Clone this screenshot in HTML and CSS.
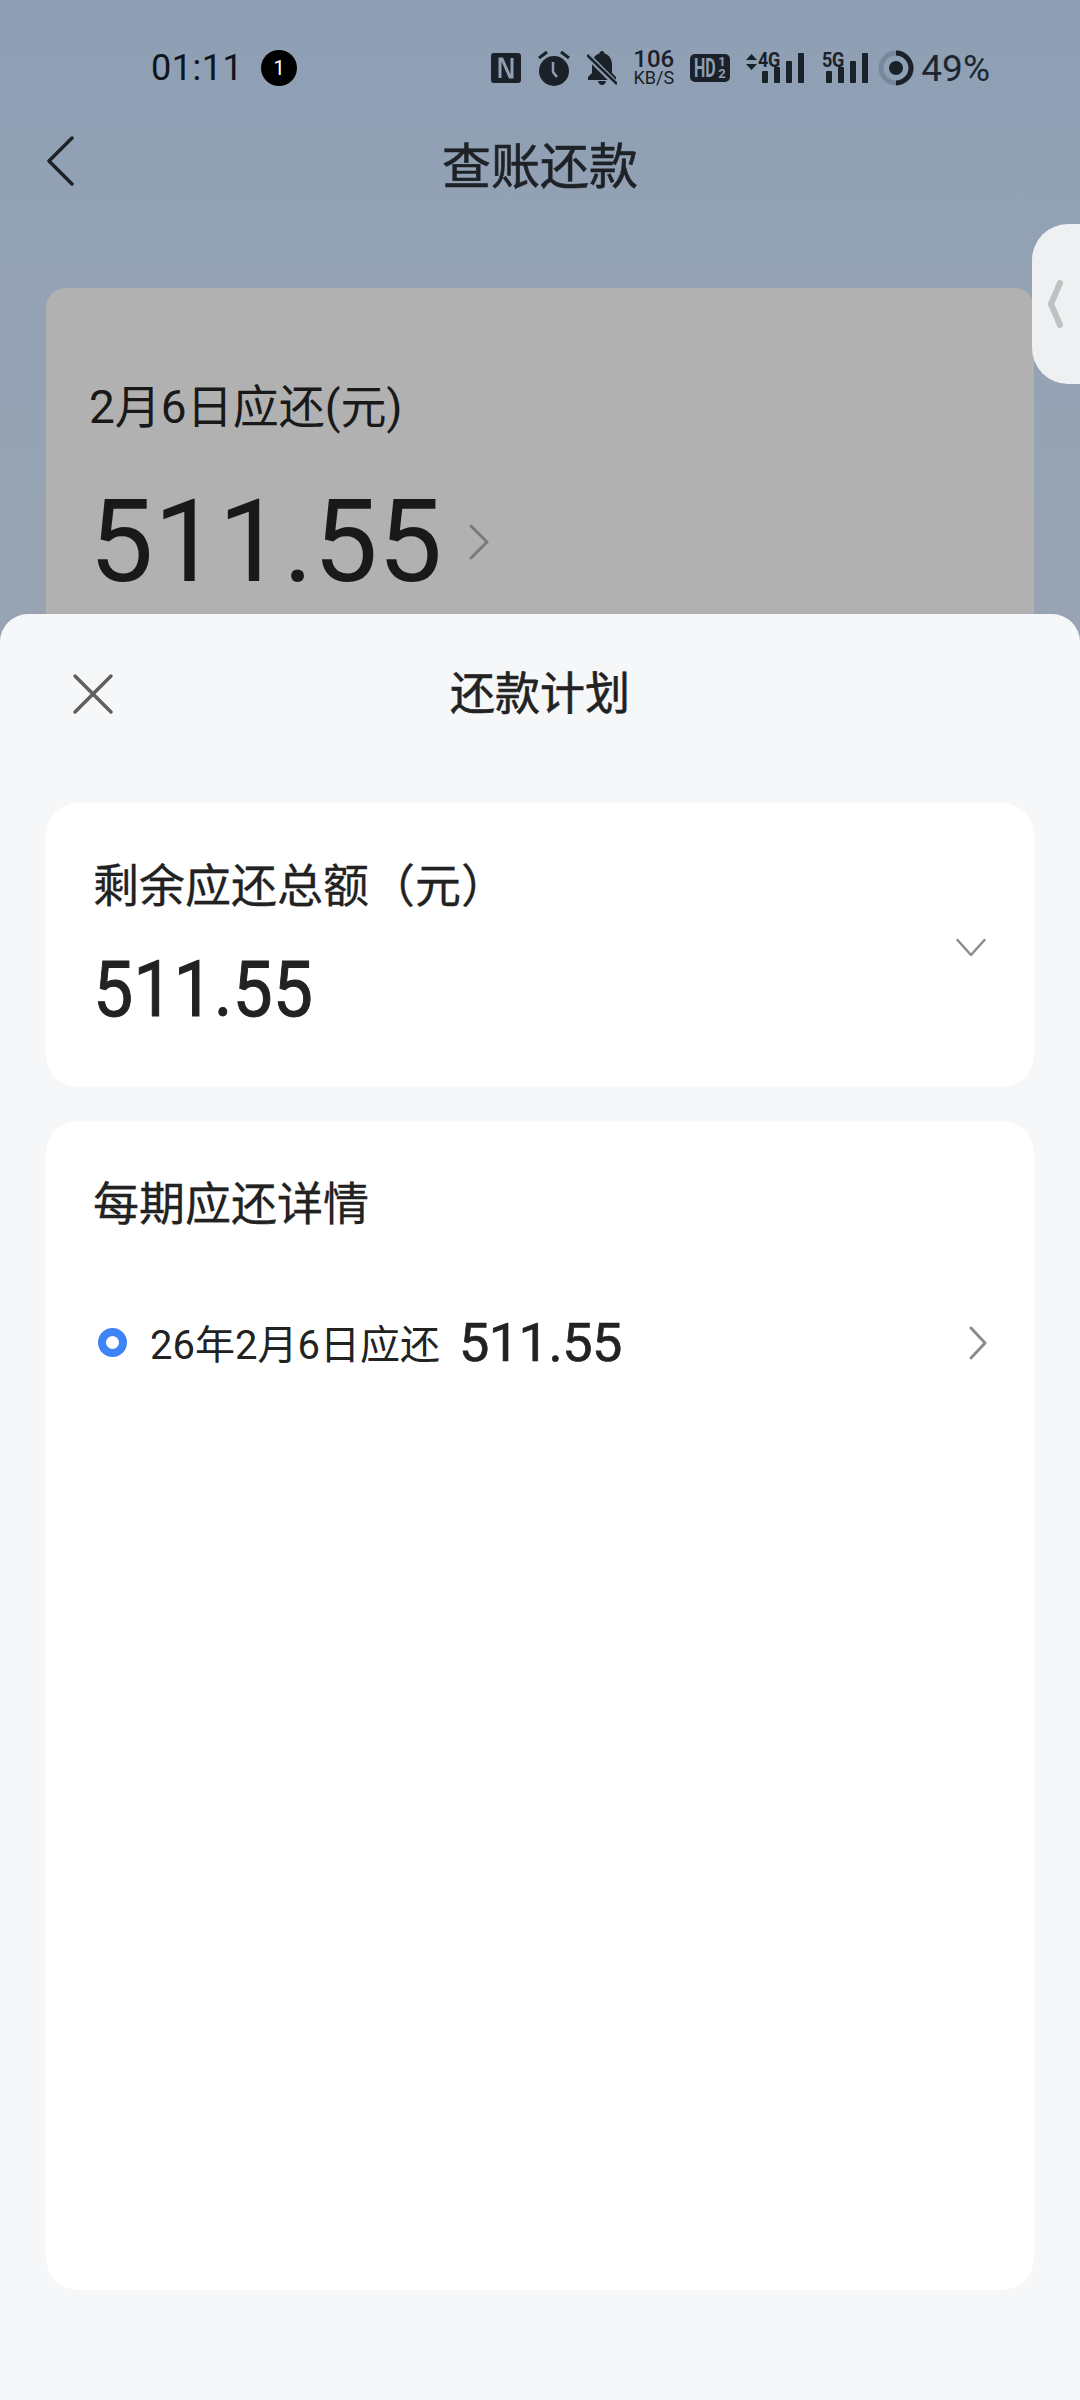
FILE: index.html
```html
<!DOCTYPE html>
<html>
<head>
    <meta charset="utf-8" />
    <title>查账还款</title>
    <link rel="stylesheet" href="styles.css">
</head>
<body>
<div class="page">
    <div class="status-bar">
        <div class="status-left">
            <span class="clock">01:11</span>
            <span class="notice-count">1</span>
        </div>
        <div class="status-right">
            <div class="status-icons">
                <svg class="ic-nfc" width="30" height="30" viewBox="0 0 30 30">
                    <rect width="30" height="30" rx="3" fill="#1b2129"/>
                    <path d="M9 25V6h2l8 18h2V5" fill="none" stroke="#8e9fb4" stroke-width="3"/>
                </svg>
                <svg class="ic-alarm" width="34" height="36" viewBox="0 0 34 36">
                    <circle cx="17" cy="21" r="15" fill="#1b2129"/>
                    <path d="M2 8l8-6M32 8l-8-6" stroke="#1b2129" stroke-width="3" fill="none"/>
                    <path d="M16 12v10l4 5" stroke="#8e9fb4" stroke-width="2.5" fill="none"/>
                </svg>
                <svg class="ic-bell" width="30" height="36" viewBox="0 0 30 36">
                    <path d="M15 1c1.500 0 2.500 1 2.500 2.500C23 5 25 10 25 15v8l4 4v3H1v-3l4-4v-8C5 10 7 5 12.500 3.500 12.500 2 13.500 1 15 1z" fill="#1b2129"/>
                    <path d="M11 31h8c0 2-2 4-4 4s-4-2-4-4z" fill="#1b2129"/>
                    <path d="M1 6l28 28" stroke="#8e9fb4" stroke-width="6"/>
                    <path d="M0 5l30 29" stroke="#1b2129" stroke-width="2.500"/>
                </svg>
                <div class="net-speed">
                    <span class="speed-num">106</span>
                    <span class="speed-unit">KB/S</span>
                </div>
                <div class="hd-badge"><span class="hd-text">HD</span><span class="hd-sim"><i>1</i><i>2</i></span></div>
                <div class="signal signal-4g">
                    <svg class="updown" width="11" height="16" viewBox="0 0 11 16">
                        <path d="M5.500 0L11 6H0zM5.500 16L0 10h11z" fill="#1b2129"/>
                    </svg>
                    <span class="net-type">4G</span>
                    <svg class="bars" width="42" height="30" viewBox="0 0 42 30">
                        <rect x="0" y="18" width="6" height="12" rx="1"/>
                        <rect x="12" y="14" width="6" height="16" rx="1"/>
                        <rect x="24" y="8" width="6" height="22" rx="1"/>
                        <rect x="36" y="0" width="6" height="30" rx="1"/>
                    </svg>
                </div>
                <div class="signal signal-5g">
                    <span class="net-type">5G</span>
                    <svg class="bars" width="42" height="30" viewBox="0 0 42 30">
                        <rect x="0" y="18" width="6" height="12" rx="1"/>
                        <rect x="12" y="14" width="6" height="16" rx="1"/>
                        <rect x="24" y="8" width="6" height="22" rx="1"/>
                        <rect x="36" y="0" width="6" height="30" rx="1"/>
                    </svg>
                </div>
            </div>
            <div class="battery">
                <svg width="36" height="36" viewBox="0 0 36 36">
                    <circle cx="18" cy="18" r="15" fill="none" stroke="#78889c" stroke-width="5"/>
                    <path d="M18 3a15 15 0 0 1 0 30" fill="none" stroke="#1b2129" stroke-width="5"/>
                    <circle cx="18" cy="18" r="7" fill="#1b2129"/>
                </svg>
                <span class="battery-num">49%</span>
            </div>
        </div>
    </div>

    <div class="nav-bar">
        <svg class="nav-back" width="30" height="50" viewBox="0 0 30 50">
            <path d="M27 2L4 25l23 23" fill="none" stroke="#1e2226" stroke-width="3.500" stroke-linecap="round" stroke-linejoin="round"/>
        </svg>
        <span class="nav-title">查账还款</span>
    </div>

    <div class="bill-card">
        <div class="bill-label">2月6日应还(元)</div>
        <div class="bill-row">
            <span class="bill-amount">511.55</span>
            <svg width="20" height="36" viewBox="0 0 20 36">
                <path d="M2 2l16 16L2 34" fill="none" stroke="#7a7a7a" stroke-width="3" stroke-linecap="round" stroke-linejoin="round"/>
            </svg>
        </div>
    </div>

    <div class="side-tab">
        <svg width="16" height="48" viewBox="0 0 16 48">
            <path d="M13 3L4 24l9 21" fill="none" stroke="#bfc1c2" stroke-width="6" stroke-linecap="round" stroke-linejoin="round"/>
        </svg>
    </div>

    <div class="sheet">
        <div class="sheet-head">
            <svg class="sheet-close" width="42" height="42" viewBox="0 0 42 42">
                <path d="M3 3l36 36M39 3L3 39" fill="none" stroke="#5f5f5f" stroke-width="3.500" stroke-linecap="round"/>
            </svg>
            <span class="sheet-title">还款计划</span>
        </div>
        <div class="sheet-body">
            <div class="panel panel-total">
                <div>
                    <div class="panel-label">剩余应还总额（元）</div>
                    <div class="total-num">511.55</div>
                </div>
                <svg class="total-arrow" width="30" height="20" viewBox="0 0 30 20">
                    <path d="M1.500 2L15 17 28.500 2" fill="none" stroke="#8c8c8c" stroke-width="2.500" stroke-linecap="round" stroke-linejoin="round"/>
                </svg>
            </div>
            <div class="panel panel-detail">
                <div class="panel-label">每期应还详情</div>
                <div class="period-row">
                    <span class="period-dot"></span>
                    <span class="period-date">26年2月6日应还</span>
                    <span class="period-num">511.55</span>
                    <svg class="period-arrow" width="18" height="34" viewBox="0 0 18 34">
                        <path d="M2 2l14 15L2 32" fill="none" stroke="#8c8c8c" stroke-width="3" stroke-linecap="round" stroke-linejoin="round"/>
                    </svg>
                </div>
            </div>
        </div>
    </div>
</div>
</body>
</html>
```

FILE: styles.css
```css
* {
    box-sizing: border-box;
}
body {
    margin: 0px;
    font-family: Roboto, "Noto Sans CJK SC", sans-serif;
    color: #222;
}
.page {
    position: relative;
    width: 1080px;
    height: 2400px;
    overflow: hidden;
    background: linear-gradient(180deg, #8e9fb5 0px, #92a1b4 200px, #98a4b3 620px);
}

/* status bar */
.status-bar {
    height: 136px;
    display: flex;
    justify-content: space-between;
    align-items: center;
    padding: 0 90px 0 151px;
}
.status-left {
    display: flex;
    align-items: center;
    gap: 18px;
}
.clock {
    font-size: 36px;
    color: #10151b;
    letter-spacing: 0.5px;
}
.notice-count {
    width: 36px;
    height: 36px;
    border-radius: 50%;
    background: #000;
    color: #fff;
    font-size: 20px;
    line-height: 36px;
    text-align: center;
}
.status-right {
    display: flex;
    align-items: center;
    gap: 10px;
}
.status-icons {
    display: flex;
    align-items: center;
    gap: 16px;
}
.net-speed {
    width: 41px;
    display: flex;
    flex-direction: column;
    align-items: center;
    color: #1b2129;
}
.speed-num {
    font-size: 24px;
    line-height: 19px;
    font-weight: 500;
}
.speed-unit {
    font-size: 18px;
    line-height: 17px;
    white-space: nowrap;
}
.hd-badge {
    width: 40px;
    height: 28px;
    padding: 0 2px 0 4px;
    border-radius: 5px;
    background: #1b2129;
    color: #8e9fb4;
    display: flex;
    align-items: center;
    font-weight: 700;
}
.hd-text {
    width: 24px;
    font-size: 25px;
    transform: scaleX(0.64);
    transform-origin: left center;
}
.hd-sim {
    display: flex;
    flex-direction: column;
    font-size: 13px;
    line-height: 12px;
}
.hd-sim i {
    font-style: normal;
}
.signal {
    position: relative;
    display: flex;
    align-items: flex-end;
    height: 30px;
}
.signal-4g {
    width: 60px;
    padding-left: 16px;
}
.signal-5g {
    width: 46px;
    padding-left: 4px;
}
.updown {
    position: absolute;
    left: 0;
    top: 1px;
}
.net-type {
    position: absolute;
    top: -3px;
    font-size: 20px;
    line-height: 20px;
    font-weight: 700;
    letter-spacing: -0.5px;
    color: #1b2129;
    transform: scaleX(0.9);
    transform-origin: left center;
}
.signal-4g .net-type {
    left: 12px;
}
.signal-5g .net-type {
    left: 0;
}
.bars {
    fill: #1b2129;
}
.battery {
    display: flex;
    align-items: center;
    gap: 7px;
}
.battery-num {
    font-size: 37px;
    color: #1c2630;
}

/* page title */
.nav-bar {
    height: 58px;
    padding-bottom: 6px;
    display: flex;
    align-items: center;
    justify-content: center;
    position: relative;
}
.nav-back {
    position: absolute;
    left: 45px;
    top: 0;
}
.nav-title {
    font-size: 49px;
    -webkit-text-stroke: 0.6px #1e2226;
    color: #1e2226;
}

/* bill summary behind the sheet */
.bill-card {
    margin: 94px 46px 0;
    height: 400px;
    padding: 89px 43px 0;
    border-radius: 20px;
    background: #b1b1b1;
    color: #191919;
}
.bill-label {
    font-size: 46px;
    line-height: 60px;
}
.bill-row {
    display: flex;
    align-items: center;
    gap: 27px;
    margin-top: 40px;
}
.bill-amount {
    font-size: 115px;
    line-height: 130px;
}
.side-tab {
    position: absolute;
    right: 0;
    top: 224px;
    width: 48px;
    height: 160px;
    padding-left: 15px;
    border-radius: 36px 0 0 36px;
    background: #eef0f1;
    display: flex;
    align-items: center;
}

/* repayment plan sheet */
.sheet {
    position: absolute;
    left: 0;
    right: 0;
    top: 614px;
    bottom: 0;
    border-radius: 28px 28px 0 0;
    background: #f6f7f9;
}
.sheet-head {
    position: relative;
    height: 158px;
    padding-bottom: 6px;
    display: flex;
    align-items: center;
    justify-content: center;
}
.sheet-close {
    position: absolute;
    left: 72px;
    top: 59px;
}
.sheet-title {
    font-size: 45px;
    -webkit-text-stroke: 0.6px #222;
}
.sheet-body {
    padding: 31px 46px 0;
    display: flex;
    flex-direction: column;
    gap: 34px;
}
.panel {
    border-radius: 32px;
    background: #fff;
}
.panel-label {
    font-size: 46px;
    line-height: 60px;
    -webkit-text-stroke: 0.3px #222;
}
.panel-total {
    height: 284px;
    padding: 0 48px 0 47px;
    display: flex;
    align-items: center;
    justify-content: space-between;
}
.total-num {
    width: 214px;
    margin-top: 30px;
    font-size: 77px;
    line-height: 88px;
    -webkit-text-stroke: 1px #222;
    transform: scaleX(0.93);
    transform-origin: left center;
}
.total-arrow {
    margin-top: 6px;
}
.panel-detail {
    height: 1169px;
    padding: 53px 47px 0;
}
.period-row {
    height: 60px;
    margin-top: 78px;
    padding-left: 5px;
    display: flex;
    align-items: center;
}
.period-dot {
    width: 29px;
    height: 29px;
    border-radius: 50%;
    border: 8px solid #3f83f8;
    background: #fff;
}
.period-date {
    margin-left: 23px;
    font-size: 40px;
}
.period-num {
    margin-left: 19px;
    font-size: 54px;
    letter-spacing: -0.5px;
    -webkit-text-stroke: 0.7px #222;
}
.period-arrow {
    margin-left: auto;
    margin-top: 2px;
}
```
